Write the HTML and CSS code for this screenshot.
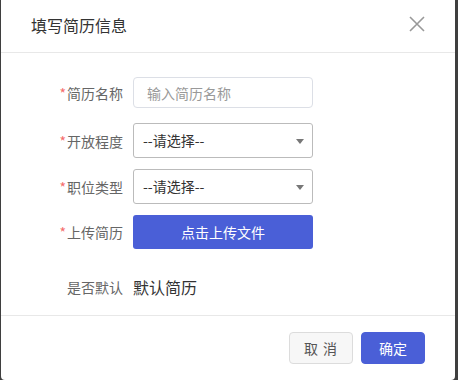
FILE: index.html
```html
<!DOCTYPE html>
<html lang="zh-CN">
	<head>
		<meta charset="utf-8">
		<title>填写简历信息</title>
		<link rel="stylesheet" href="styles.css">
	</head>
	<body>
		<div class="dialog">
			<div class="dialog-header">
				<span class="dialog-title">填写简历信息</span>
				<span class="dialog-close">
					<svg width="18" height="18" viewBox="0 0 18 18"><path d="M2 2L16 16M16 2L2 16" stroke="#999" stroke-width="1.6" fill="none"/></svg>
				</span>
			</div>
			<div class="dialog-body">
				<div class="field">
					<label><i>*</i>简历名称</label>
					<input class="text-input" type="text" placeholder="输入简历名称">
				</div>
				<div class="field field-select">
					<label><i>*</i>开放程度</label>
					<div class="select">--请选择--<span class="caret"></span></div>
				</div>
				<div class="field field-select">
					<label><i>*</i>职位类型</label>
					<div class="select">--请选择--<span class="caret"></span></div>
				</div>
				<div class="field field-upload">
					<label><i>*</i>上传简历</label>
					<button class="upload">点击上传文件</button>
				</div>
				<div class="field field-default">
					<label>是否默认</label>
					<span class="default-text">默认简历</span>
				</div>
			</div>
			<div class="dialog-footer">
				<button class="btn btn-cancel">取&nbsp;消</button>
				<button class="btn btn-primary">确定</button>
			</div>
		</div>
	</body>
</html>
```

FILE: styles.css
```css
html, body {
	margin: 0;
	height: 100%;
}
body {
	background: #3f3f3f;
	font-family: "Noto Sans CJK SC", "Liberation Sans", sans-serif;
	font-size: 14px;
	color: #333;
	padding: 0 3px 0 1px;
	box-sizing: border-box;
}
.dialog {
	background: #fff;
	height: 380px;
	border-radius: 0 0 4px 4px;
	display: flex;
	flex-direction: column;
}

.dialog-header {
	height: 53px;
	flex-shrink: 0;
	border-bottom: 1px solid #e8e8e8;
	display: flex;
	align-items: center;
	justify-content: space-between;
	padding: 0 29px 0 30px;
	box-sizing: border-box;
}
.dialog-title {
	font-size: 16px;
	color: #333;
	margin-top: -2px;
}
.dialog-close {
	display: flex;
	margin-top: -4px;
}

.dialog-body {
	padding: 24px 0 0 0;
	height: 263px;
	flex-shrink: 0;
	box-sizing: border-box;
	border-bottom: 1px solid #e8e8e8;
}
.field {
	display: flex;
	align-items: center;
	margin-bottom: 15px;
}
.field > label {
	width: 122px;
	text-align: right;
	padding-right: 10px;
	color: #666;
	font-size: 14px;
}
.field > label > i {
	font-style: normal;
	color: #f56c6c;
	margin-right: 1px;
}
.text-input {
	width: 180px;
	height: 31px;
	box-sizing: border-box;
	border: 1px solid #dcdfe6;
	border-radius: 4px;
	padding: 0 13px;
	font-family: inherit;
	font-size: 14px;
	outline: none;
}
.text-input::placeholder {
	color: #999;
}
.field-select {
	margin-bottom: 11px;
}
.select {
	position: relative;
	width: 180px;
	height: 35px;
	box-sizing: border-box;
	border: 1px solid #bbb;
	border-radius: 3px;
	padding: 0 9px;
	line-height: 33px;
	color: #333;
	font-size: 14px;
}
.caret {
	position: absolute;
	right: 8px;
	top: 15px;
	border-left: 4px solid transparent;
	border-right: 4px solid transparent;
	border-top: 5px solid #777;
}
.upload {
	width: 180px;
	height: 34px;
	border: none;
	border-radius: 3px;
	background: #4a5fd7;
	color: #fff;
	font-family: inherit;
	font-size: 14px;
}
.field-default {
	margin-top: 26px;
}
.default-text {
	font-size: 16px;
	color: #333;
}

.dialog-footer {
	display: flex;
	justify-content: flex-end;
	padding: 16px 30px 0 0;
	gap: 8px;
}
.btn {
	width: 64px;
	height: 32px;
	border-radius: 4px;
	font-family: inherit;
	font-size: 14px;
	box-sizing: border-box;
}
.btn-cancel {
	background: #f7f7f7;
	border: 1px solid #dcdcdc;
	color: #555;
	letter-spacing: 1px;
}
.btn-primary {
	background: #4a5fd7;
	border: 1px solid #4a5fd7;
	color: #fff;
}
```
